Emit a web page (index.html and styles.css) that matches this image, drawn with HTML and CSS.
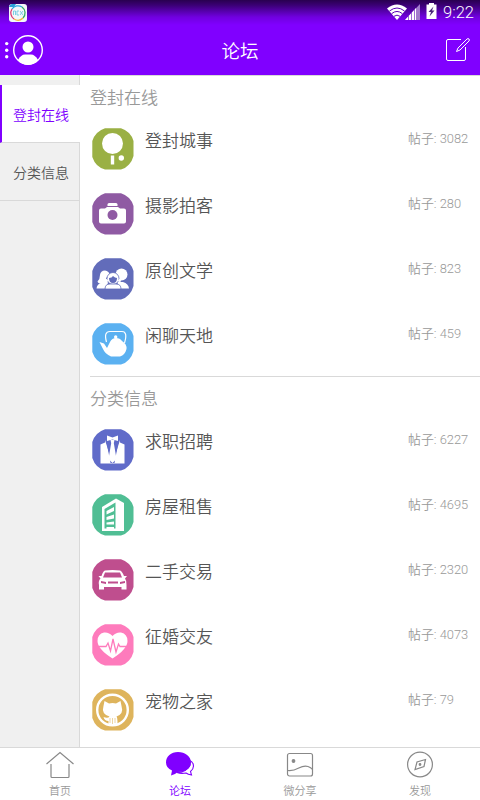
FILE: index.html
```html
<!DOCTYPE html>
<html lang="zh-CN">
<head>
<meta charset="utf-8">
<title>论坛</title>
<link rel="stylesheet" href="styles.css">
</head>
<body>
<div class="app">
  <header class="header">
    <div class="status">
      <svg class="app-badge" width="18" height="18" viewBox="0 0 18 18"><rect width="18" height="18" rx="3" fill="#f4f8fa"/><g fill="none" stroke-width="1.3"><path d="M3 5A7.3 7.3 0 0 1 13 3" stroke="#29a9df"/><path d="M13 3A7.3 7.3 0 0 1 14 14" stroke="#35ad68"/><path d="M14 14A7.3 7.3 0 0 1 5 15" stroke="#f4b63c"/><path d="M5 15A7.3 7.3 0 0 1 3 5" stroke="#df3c72"/><path d="M4.5 11V7h2v4M10 7H8v4h2M11 7l3 4M14 7l-3 4" stroke="#62c4df" stroke-width=".8"/></g><path d="M0 3Q1 0 3 0H7L5 3Z" fill="#29a1d7"/></svg>
      <div class="status-right">
        <svg class="wifi" width="20" height="16" viewBox="0 0 20 16"><path d="M0 4.5Q10-3.5 20 4.5L10 16Z" fill="#fff"/><path d="M2.5 7Q10 1 17.500 7M4.700 9.600Q10 5.300 15.300 9.600M7 12.300Q10 10 13 12.300" fill="none" stroke="#5b00b5" stroke-width="1"/></svg>
        <svg class="signal" width="16" height="16" viewBox="0 0 16 16"><path d="M0 16L15 0V16Z" fill="#a27bcc"/><path d="M0 16L11 4V16Z" fill="#fff"/><path d="M3.500 11V16M6.500 8V16M9.500 5V16" stroke="#7626c7" stroke-width=".7"/></svg>
        <svg class="battery" width="11" height="16" viewBox="0 0 11 16"><path d="M3 0H8V1.500H10.500V16H.5V1.500H3Z" fill="#fff"/><path d="M7.500 3.500L2.500 9H5L3.500 13.500L8.500 7.500H6Z" fill="#4a267a"/></svg>
        <span class="clock">9:22</span>
      </div>
    </div>
    <div class="bar">
      <svg class="profile" width="40" height="32" viewBox="0 0 40 32"><g fill="#fff"><circle cx="2.700" cy="9.600" r="1.700"/><circle cx="2.700" cy="16.200" r="1.700"/><circle cx="2.700" cy="22.700" r="1.700"/><circle cx="24" cy="13" r="5.500"/><path d="M14 26Q17 20.500 21 20.500H27Q31 20.500 34 26Q30 31 24 31T14 26Z"/></g><circle cx="24" cy="16" r="14.300" fill="none" stroke="#fff" stroke-width="1.400"/></svg>
      <h1 class="title">论坛</h1>
      <svg class="compose" width="26" height="26" viewBox="0 0 26 26" fill="none" stroke="#fff" stroke-width="1"><path d="M16 2.500H3Q1.500 2.500 1.500 4V22Q1.500 23.500 3 23.500H19Q20.500 23.500 20.500 22V10"/><path d="M11.500 14.500L13 11L22 2Q23 1.200 24 2Q24.800 3 24 4L15 13Z"/></svg>
    </div>
  </header>

  <div class="main">
    <nav class="side">
      <a class="side-item active">登封在线</a>
      <a class="side-item">分类信息</a>
    </nav>
    <main class="boards">
      <section class="group">
        <h2 class="group-title">登封在线</h2>
        <div class="row">
          <svg class="icon" viewBox="0 0 42 42"><path class="disc" fill="#9ab044"/><circle cx="20.500" cy="15.500" r="10.500" fill="#fff"/><path d="M18.800 27.500H22.200V36.500H18.800Z" fill="#fff"/><circle cx="29.300" cy="30" r="2.700" fill="#fff"/></svg>
          <span class="name">登封城事</span><span class="count">帖子: 3082</span>
        </div>
        <div class="row">
          <svg class="icon" viewBox="0 0 42 42"><path class="disc" fill="#8f5aa3"/><g fill="#fff"><path d="M15.500 11.500Q15.500 10 17 10H24Q25.500 10 25.500 11.500V13H15.500Z"/><path d="M15 14H26L28 15.500H32Q34 15.500 34 17.500V28.500Q34 30.500 32 30.500H9Q7 30.500 7 28.500V17.500Q7 15.500 9 15.500H13Z"/></g><circle cx="20.500" cy="22" r="5" fill="#8f5aa3"/></svg>
          <span class="name">摄影拍客</span><span class="count">帖子: 280</span>
        </div>
        <div class="row">
          <svg class="icon" viewBox="0 0 42 42"><path class="disc" fill="#626cba"/><g fill="#fff"><path d="M4.500 30.500Q5 26 9 25Q6 26 5.500 23.500Q8 21 8 17Q8.500 12.500 13 12.500Q17 13 18 17L14 20L16 25L13 30.500Z"/><circle cx="29.500" cy="16.500" r="6"/><path d="M25 24H31Q36.500 25.500 37 30.500H28Z"/><g stroke="#626cba" stroke-width=".8"><circle cx="21" cy="20.500" r="6"/><path d="M13 31Q13 26 18 26H24Q29 26 29 31Z"/></g><circle cx="14.500" cy="22.500" r="1.500"/><circle cx="27.500" cy="22.500" r="1.500"/></g><path d="M17 20Q20 20 21 18Q23 20 25 20Q25 25 21 25T17 20Z" fill="#626cba"/></svg>
          <span class="name">原创文学</span><span class="count">帖子: 823</span>
        </div>
        <div class="row">
          <svg class="icon" viewBox="0 0 42 42"><path class="disc" fill="#5bb1f1"/><path d="M14.500 19Q11.500 8.500 18 8.500H30Q36 8.500 32.500 20" fill="none" stroke="#fff" stroke-width="1.200"/><g fill="#fff"><path d="M7.500 19L12 20.500L15 25L18 19Q20 15 24 15Q28 15 30 18Q35 21 34.500 26Q33 32 28 33.500H19Q13 31 11 26Z"/><circle cx="23.700" cy="14" r="1.700"/></g></svg>
          <span class="name">闲聊天地</span><span class="count">帖子: 459</span>
        </div>
      </section>
      <section class="group">
        <h2 class="group-title">分类信息</h2>
        <div class="row">
          <svg class="icon" viewBox="0 0 42 42"><path class="disc" fill="#606bc9"/><g fill="#fff"><path d="M8.500 34.500V15.500L13 13.500V11L20.500 34.500L28 11V13.500L32.500 15.500V34.500Z"/><path d="M15 6.500L20.500 8.500L26 6.500V12L20.500 10.500L15 12Z"/></g><path d="M14.500 13L19 11.500H22L26.500 13L22.500 34H18.500Z" fill="#606bc9"/><path d="M18.500 11H22.500L21.800 14L24.500 30L20.500 34L16.500 30L19.200 14Z" fill="#fff"/></svg>
          <span class="name">求职招聘</span><span class="count">帖子: 6227</span>
        </div>
        <div class="row">
          <svg class="icon" viewBox="0 0 42 42"><path class="disc" fill="#50be94"/><path d="M10 37V13L24 4.500L32 9V37Z" fill="#fff"/><path d="M12.500 34.500V15L23.500 8.500V34.500Z" fill="#50be94"/><path d="M14.500 17L22 13V17L14.500 20.500ZM14.500 23L22 20.500V24.500L14.500 26ZM14.500 28.500L22 27.500V30.500H14.500ZM14.500 33H22V35H14.500Z" fill="#fff"/></svg>
          <span class="name">房屋租售</span><span class="count">帖子: 4695</span>
        </div>
        <div class="row">
          <svg class="icon" viewBox="0 0 42 42"><path class="disc" fill="#bf4e8e"/><path d="M13 11.500Q20.500 10.500 28 11.500Q30 12 32 17H35L33 19.500Q35 22 34.500 26V30.500H29.500V28H12V30.500H7V26Q6 22 8.500 19.500L6.500 17H9.500Q11 12 13 11.500Z" fill="#fff"/><g fill="#bf4e8e"><path d="M13 13.500H28L30 18.500H11ZM9 22L14 23V25L9 24ZM33 22L28 23V25L33 24ZM16 22.500H26V24.500H16Z"/></g></svg>
          <span class="name">二手交易</span><span class="count">帖子: 2320</span>
        </div>
        <div class="row">
          <svg class="icon" viewBox="0 0 42 42"><path class="disc" fill="#fe7bbc"/><path d="M20.500 12Q17 8 12 8.500Q5.500 10 5.500 17Q5.500 25 20.500 34.500Q35.500 25 35.500 17Q35.500 10 29 8.500Q24 8 20.500 12Z" fill="#fff"/><path d="M6.500 22.500H14L16 19L18.500 27L21 15L24 28L26.500 20L28 22.500H34.500" fill="none" stroke="#fe7bbc" stroke-width="1.300"/></svg>
          <span class="name">征婚交友</span><span class="count">帖子: 4073</span>
        </div>
        <div class="row">
          <svg class="icon" viewBox="0 0 42 42"><path class="disc" fill="#deb45c"/><circle cx="20.500" cy="21" r="15.300" fill="none" stroke="#fff" stroke-width="2.400"/><path d="M12.500 12L17 14.500Q20.500 13.500 24 14.500L28.500 12L29.500 17Q32 25 24.500 27.500Q25.500 28 25.500 35H16.500V32Q12.500 32 11.500 28Q14 29 16.500 28.500L17.500 27.500Q9 25 11.500 17Z" fill="#fff"/><path d="M18 29V34M20.500 29V35M23 29V34" stroke="#e8ca8a" stroke-width=".8"/></svg>
          <span class="name">宠物之家</span><span class="count">帖子: 79</span>
        </div>
      </section>
    </main>
  </div>

  <footer class="tabs">
    <a class="tab"><svg width="30" height="28" viewBox="0 0 30 28" fill="none" stroke="#888" stroke-width="1.200"><path d="M1.500 13L15 1.500L28.500 13M6 13V25.500Q6 26.500 7 26.500H23Q24 26.500 24 25.500V13"/></svg><span>首页</span></a>
    <a class="tab current"><svg width="30" height="28" viewBox="0 0 30 28"><path d="M24 9Q28.500 11 28.500 15Q28.500 18 25.500 20.500L26.500 24Q23 23.500 21 22Q16 23 12 21.500Q22 21 25 14Z" fill="#fff" stroke="#8000ff" stroke-width="1.100"/><path d="M13 1C20 1 26 5.500 26 11.500C26 17.500 20 21 13 21Q10 23.500 6 24.500L7 19.500Q1 17 1 11.500C1 5.500 6 1 13 1Z" fill="#8000ff"/></svg><span>论坛</span></a>
    <a class="tab"><svg width="30" height="28" viewBox="0 0 30 28" fill="none" stroke="#888" stroke-width="1.200"><rect x="2.500" y="2.500" width="25" height="22.500" rx="2"/><circle cx="8.500" cy="10" r="1.300" fill="#888"/><path d="M2.500 19.500C13 21 15 13 23 15.500Q26 16.500 27.500 18.500"/></svg><span>微分享</span></a>
    <a class="tab"><svg width="30" height="28" viewBox="0 0 30 28" fill="none" stroke="#888" stroke-width="1.200"><circle cx="15" cy="13.500" r="12.400"/><path d="M20.500 8.500L19 15.500L10 18.500L12 11Z"/><circle cx="15" cy="13.500" r=".8" fill="#888"/></svg><span>发现</span></a>
  </footer>
</div>
</body>
</html>
```
FILE: styles.css
```css
* { box-sizing: border-box; }
body {
  margin: 0;
  font-family: Roboto, "Noto Sans CJK SC", sans-serif;
  font-weight: 350;
  color: #555;
  background: #fff;
}
svg { display: block; flex: none; }
h1, h2 { margin: 0; font-weight: 350; }

.app { display: flex; flex-direction: column; width: 480px; height: 800px; overflow: hidden; }

.header {
  flex: none;
  height: 75px;
  background: linear-gradient(#29004f 0, #3a0073 5px, #7000df 17px, #8000ff 25px);
  color: #fff;
}
.status { display: flex; justify-content: space-between; height: 25px; padding: 4px 6px 0 9px; }
.status-right { display: flex; align-items: flex-start; }
.signal { margin-left: -2px; }
.battery { margin-left: 5px; margin-top: -1px; }
.clock { margin-left: 6px; font-size: 16.5px; line-height: 18px; }
.bar { display: grid; grid-template-columns: 1fr auto 1fr; align-items: center; height: 50px; padding: 0 9px 0 4px; }
.title { font-size: 18.5px; line-height: 28px; padding: 4px 0 0 5px; }
.compose { justify-self: end; }

.main { display: flex; flex: 1; min-height: 0; }
.side { flex: none; width: 80px; padding-top: 10px; background: #f0f0f0; border-right: 1px solid #d9d9d9; }
.side-item {
  display: flex;
  align-items: center;
  height: 58px;
  padding: 1px 0 0 13px;
  border-bottom: 1px solid #d9d9d9;
  font-size: 14px;
  white-space: nowrap;
}
.side-item.active { width: 80px; padding-left: 11px; border-left: 2px solid #8000ff; background: #fff; color: #8000ff; }

.boards { flex: 1; padding-left: 10px; }
.group { border-top: 1px solid #d9d9d9; }
.group-title { height: 40px; font-size: 17px; line-height: 44px; color: #999; }
.row { display: flex; align-items: flex-start; height: 65px; padding: 11.5px 0 0 2px; }
.icon { width: 42px; height: 42px; }
.disc { d: path("M13 .3H29Q34 2 37 5Q40 8 41.500 13V28Q40 33.500 37 36.500Q34 40 29 41.500H13Q8 40 5 37Q2 34 .3 29V13Q2 8 5 5Q8 2 13 .3Z"); }
.name { flex: 1; margin-left: 11px; font-size: 17px; line-height: 26px; }
.count { width: 72px; font-size: 12.9px; line-height: 22px; color: #999; white-space: nowrap; }

.tabs { display: flex; flex: none; height: 53px; border-top: 1px solid #d9d9d9; background: #fff; }
.tab { display: flex; flex: 1; flex-direction: column; align-items: center; padding-top: 3px; font-size: 11px; line-height: 16px; color: #999; }
.tab span { margin-top: 5px; }
.tab.current { color: #8000ff; }
```
